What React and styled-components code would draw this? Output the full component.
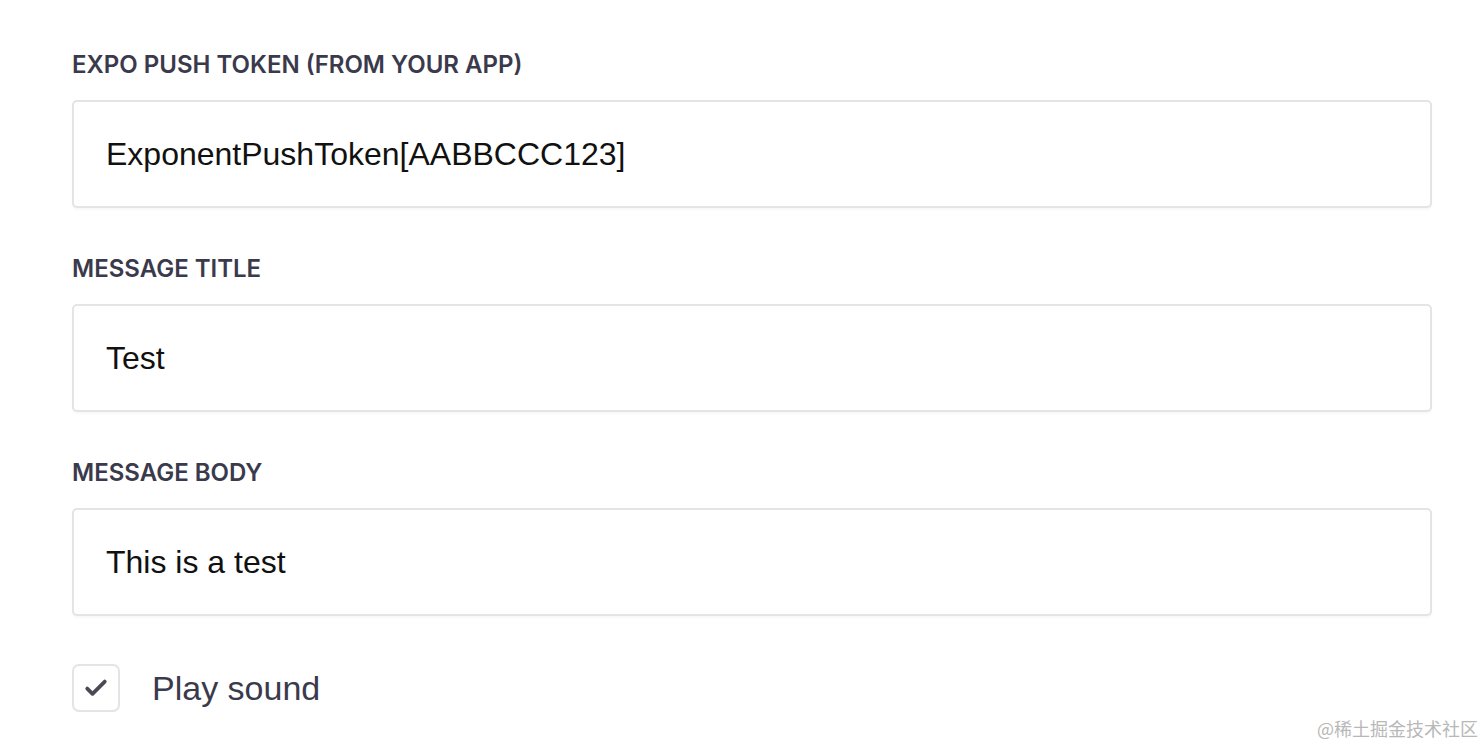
import React from "react";
import styled, { createGlobalStyle } from "styled-components";

const GlobalStyle = createGlobalStyle`
  body {
    margin: 0;
    background: #ffffff;
    font-family: "Liberation Sans", Arial, sans-serif;
  }
`;

const Page = styled.div`
  position: relative;
  width: 1484px;
  height: 746px;
  overflow: hidden;
  background: #fff;
`;

const Form = styled.form`
  display: flex;
  flex-direction: column;
  gap: 44px;
  width: 1360px;
  padding: 48px 0 0 72px;
`;

const Field = styled.div`
  display: flex;
  flex-direction: column;
  gap: 18px;
`;

const Label = styled.label`
  font-family: Inter, "Noto Sans", sans-serif;
  font-size: 24px;
  line-height: 34px;
  font-weight: 600;
  color: #3a3a4c;
  text-transform: uppercase;
`;

const Input = styled.input`
  box-sizing: border-box;
  width: 100%;
  height: 108px;
  padding: 0 32px;
  border: 2px solid #e4e4e4;
  border-radius: 5px;
  box-shadow: 0 2px 2px rgba(0, 0, 0, 0.03);
  background: #fff;
  font-family: "Liberation Sans", Arial, sans-serif;
  font-size: 32px;
  color: #111;
  outline: none;
`;

const CheckRow = styled.label`
  display: flex;
  align-items: center;
  gap: 32px;
  margin-top: 4px;
`;

const Box = styled.span`
  box-sizing: border-box;
  display: flex;
  align-items: center;
  justify-content: center;
  width: 48px;
  height: 48px;
  border: 2px solid #e4e4e4;
  border-radius: 7px;
  background: #fff;
`;

const CheckText = styled.span`
  font-family: "Liberation Sans", Arial, sans-serif;
  font-size: 34px;
  color: #3a3a4c;
`;

const Watermark = styled.div`
  position: absolute;
  right: 6px;
  bottom: 5px;
  font-family: "Noto Sans CJK SC", sans-serif;
  font-size: 18px;
  color: #b8b8b8;
`;

const fields = [
  { label: "Expo push token (from your app)", value: "ExponentPushToken[AABBCCC123]" },
  { label: "Message title", value: "Test" },
  { label: "Message body", value: "This is a test" },
];

export default function App() {
  return (
    <Page>
      <GlobalStyle />
      <Form onSubmit={(e) => e.preventDefault()}>
        {fields.map((f) => (
          <Field key={f.label}>
            <Label>{f.label}</Label>
            <Input defaultValue={f.value} />
          </Field>
        ))}
        <CheckRow>
          <Box>
            <svg width="28" height="28" viewBox="0 0 24 24" fill="none">
              <path d="M4.5 12.5l4.5 4.5L19.5 6.5" stroke="#4a4a55" strokeWidth="3.2" strokeLinecap="round" strokeLinejoin="round" />
            </svg>
          </Box>
          <CheckText>Play sound</CheckText>
        </CheckRow>
      </Form>
      <Watermark>@稀土掘金技术社区</Watermark>
    </Page>
  );
}
